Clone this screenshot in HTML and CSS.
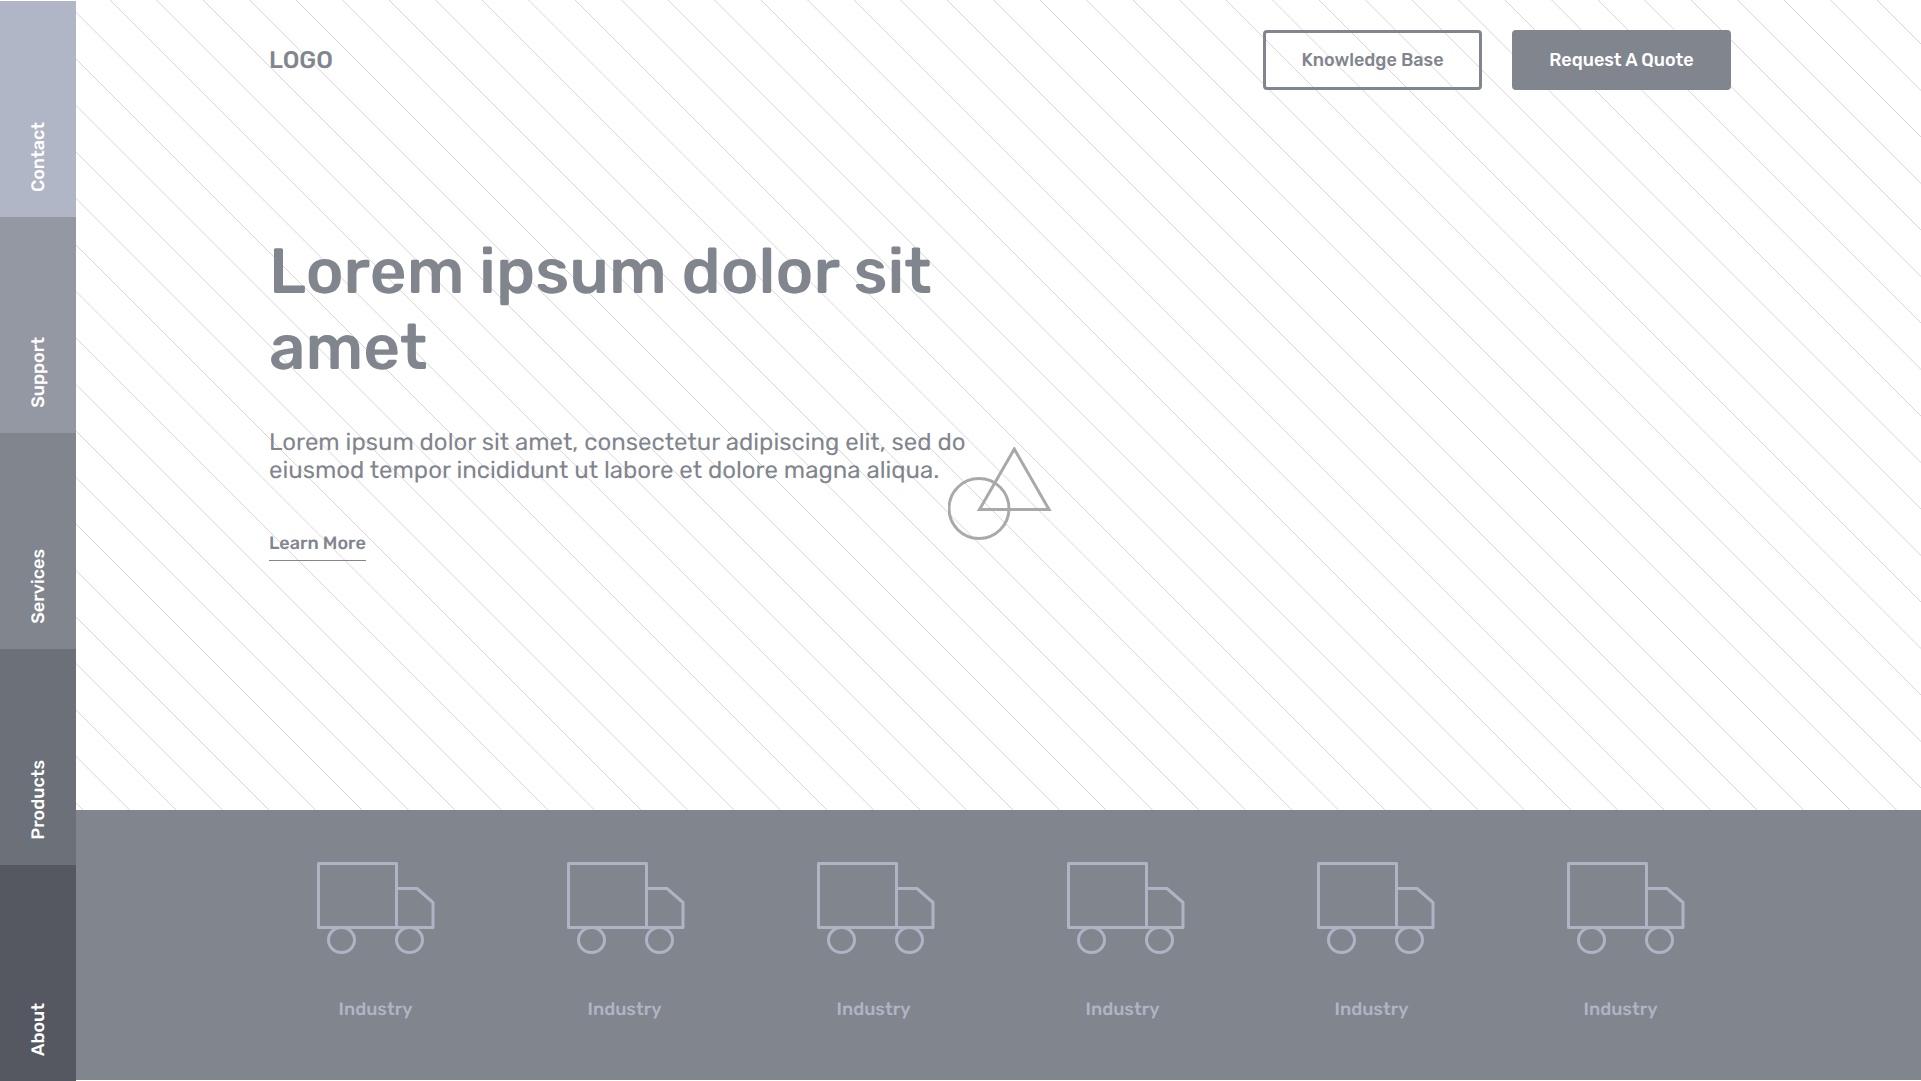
FILE: index.html
```html
<!DOCTYPE html>
<html lang="en">
<head>
<meta charset="utf-8">
<meta name="viewport" content="width=device-width, initial-scale=1">
<title>Logo</title>
<link rel="stylesheet" href="styles.css">
</head>
<body>
<nav class="side-nav">
  <a class="side-link contact" href="#"><span>Contact</span></a>
  <a class="side-link support" href="#"><span>Support</span></a>
  <a class="side-link services" href="#"><span>Services</span></a>
  <a class="side-link products" href="#"><span>Products</span></a>
  <a class="side-link about" href="#"><span>About</span></a>
</nav>
<div class="page">
  <div class="hero">
    <svg class="hero-lines" aria-hidden="true">
      <defs>
        <pattern id="diagonals" width="93" height="93" patternUnits="userSpaceOnUse" x="34" y="0">
          <path d="M-1 -1L94 94M45.500 -1L94 47.500M-1 45.500L47.500 94M92 -1L94 1M-1 92L1 94" fill="none" stroke="#d6d6d6" stroke-width="1"/>
        </pattern>
      </defs>
      <rect width="100%" height="100%" fill="url(#diagonals)"/>
    </svg>
    <svg class="hero-shapes" width="104" height="94" viewBox="0 0 104 94" fill="none" stroke="#a9a9a9" stroke-width="3" aria-hidden="true">
      <circle cx="31" cy="61.500" r="30"/>
      <path d="M66.300 2L101 62.500H31.500Z"/>
    </svg>
    <header class="top-bar">
      <a class="logo" href="#">LOGO</a>
      <div class="actions">
        <button class="button outline" type="button">Knowledge Base</button>
        <button class="button solid" type="button">Request A Quote</button>
      </div>
    </header>
    <main class="intro">
      <h1>Lorem ipsum dolor sit amet</h1>
      <p>Lorem ipsum dolor sit amet, consectetur adipiscing elit, sed do eiusmod tempor incididunt ut labore et dolore magna aliqua.</p>
      <a class="more" href="#">Learn More</a>
    </main>
  </div>
  <section class="industries">
    <svg width="0" height="0" class="symbols" aria-hidden="true">
      <symbol id="truck" viewBox="0 0 118 92">
        <g fill="none" stroke="#afb4c5" stroke-width="3" stroke-linejoin="round">
          <path d="M1.500 1.500H79.500V65.500H1.500Z"/>
          <path d="M79.500 26.500H100L116 40.500V65.500H79.500"/>
          <ellipse cx="24.500" cy="78" rx="13" ry="12.500"/>
          <ellipse cx="92.500" cy="78" rx="13" ry="12.500"/>
        </g>
      </symbol>
    </svg>
    <div class="icons" aria-hidden="true">
      <svg class="truck"><use href="#truck"/></svg>
      <svg class="truck"><use href="#truck"/></svg>
      <svg class="truck"><use href="#truck"/></svg>
      <svg class="truck"><use href="#truck"/></svg>
      <svg class="truck"><use href="#truck"/></svg>
      <svg class="truck"><use href="#truck"/></svg>
    </div>
    <div class="labels">
      <a href="#">Industry</a>
      <a href="#">Industry</a>
      <a href="#">Industry</a>
      <a href="#">Industry</a>
      <a href="#">Industry</a>
      <a href="#">Industry</a>
    </div>
  </section>
</div>
</body>
</html>
```
FILE: styles.css
```css
* {
  box-sizing: border-box;
}

body {
  margin: 0;
  min-height: 100vh;
  display: flex;
  background: #fff;
  color: #81858e;
  font-family: Rubik, Roboto, sans-serif;
  font-size: 18px;
  font-weight: 500;
  line-height: 24px;
  text-rendering: geometricPrecision;
}

a {
  color: inherit;
  text-decoration: none;
}

.side-nav {
  flex: none;
  width: 76px;
  padding-top: 1px;
  display: flex;
  flex-direction: column;
}

.side-link {
  flex: 1;
  display: flex;
  align-items: flex-end;
  justify-content: center;
  padding-bottom: 25px;
  color: #fff;
}

.side-link span {
  writing-mode: vertical-rl;
  transform: rotate(180deg);
}

.contact { background: #b0b6c5; }
.support { background: #9498a2; }
.services { background: #81858e; }
.products { background: #6b7079; }
.about { background: #555860; }

.page {
  flex: 1;
  min-width: 0;
  display: flex;
  flex-direction: column;
  padding-bottom: 1px;
}

.hero {
  position: relative;
  flex: 1;
  padding: 30px 190px 40px 193px;
}

.hero-lines {
  position: absolute;
  inset: 0;
  width: 100%;
  height: 100%;
}

.hero-shapes {
  position: absolute;
  left: 50%;
  top: 447px;
  margin-left: -51px;
}

.top-bar,
.intro {
  position: relative;
}

.top-bar {
  display: flex;
  align-items: center;
  justify-content: space-between;
}

.logo {
  font-size: 24px;
}

.actions {
  display: flex;
  gap: 30px;
}

.button {
  width: 219px;
  height: 60px;
  padding: 0;
  border: 3px solid #81858e;
  border-radius: 4px;
  font: inherit;
  cursor: pointer;
}

.outline {
  background: transparent;
  color: #81858e;
}

.solid {
  background: #81858e;
  color: #fff;
}

.intro {
  max-width: 720px;
  padding-top: 143px;
}

h1 {
  margin: 0 0 43px;
  font-size: 64px;
  font-weight: 500;
  line-height: 76px;
}

p {
  margin: 0 0 47px;
  font-size: 24px;
  font-weight: 400;
  line-height: 28px;
}

.more {
  display: inline-block;
  padding-bottom: 5px;
  border-bottom: 1px solid #81858e;
}

.industries {
  background: #81858e;
  color: #afb4c5;
  padding: 52px 170px 59px 175px;
}

.symbols {
  position: absolute;
}

.icons,
.labels {
  display: grid;
  grid-template-columns: repeat(6, 1fr);
  justify-items: center;
}

.truck {
  width: 118px;
  height: 92px;
}

.labels {
  padding: 43px 6px 0 0;
}
```
